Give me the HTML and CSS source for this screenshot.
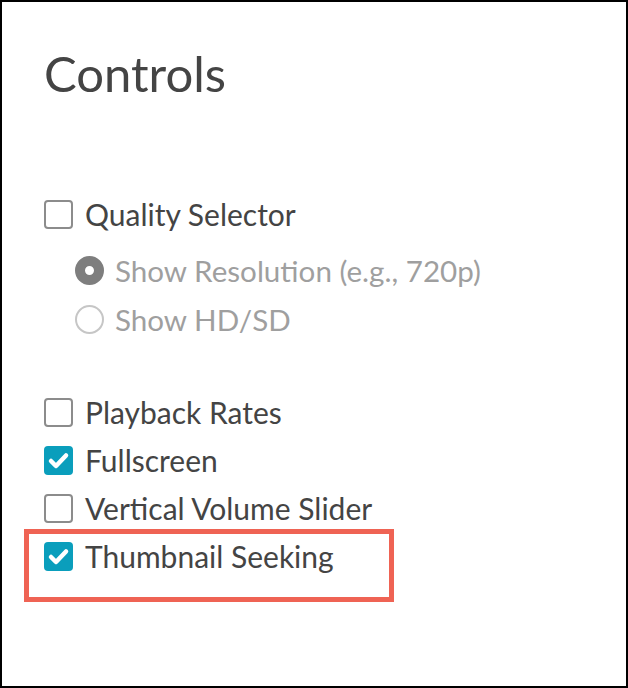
FILE: index.html
```html
<!DOCTYPE html>
<html>
<head>
<meta charset="utf-8">
<link rel="stylesheet" href="styles.css">
</head>
<body>
<div class="panel">
  <h1 class="title">Controls</h1>
  <div class="row row-first">
    <span class="box"></span><span class="label">Quality Selector</span>
  </div>
  <div class="sub">
    <div class="row row-radio">
      <span class="radio radio-on"></span><span class="label label-dim">Show Resolution (e.g., 720p)</span>
    </div>
    <div class="row row-radio">
      <span class="radio"></span><span class="label label-dim">Show HD/SD</span>
    </div>
  </div>
  <div class="group">
    <div class="row">
      <span class="box"></span><span class="label">Playback Rates</span>
    </div>
    <div class="row">
      <span class="box box-on"><svg viewBox="0 0 29 29" width="29" height="29"><path d="M7 15 L12 20 L22 9.5" fill="none" stroke="#fff" stroke-width="4.5" stroke-linecap="round" stroke-linejoin="round"/></svg></span><span class="label">Fullscreen</span>
    </div>
    <div class="row">
      <span class="box"></span><span class="label">Vertical Volume Slider</span>
    </div>
    <div class="highlight">
      <div class="row row-hl">
        <span class="box box-on"><svg viewBox="0 0 29 29" width="29" height="29"><path d="M7 15 L12 20 L22 9.5" fill="none" stroke="#fff" stroke-width="4.5" stroke-linecap="round" stroke-linejoin="round"/></svg></span><span class="label">Thumbnail Seeking</span>
      </div>
    </div>
  </div>
</div>
</body>
</html>
```
FILE: styles.css
```css
html, body {
  margin: 0;
  padding: 0;
  background: #fff;
}
.panel {
  box-sizing: border-box;
  width: 628px;
  height: 688px;
  border: 2px solid #000;
  padding: 42px 0 0 42px;
  font-family: Lato, "Open Sans", sans-serif;
  color: #444;
}
.title {
  margin: 0;
  font-size: 49px;
  font-weight: 400;
  line-height: 58px;
  color: #444;
}
.row {
  display: flex;
  align-items: center;
  height: 48px;
  font-size: 30px;
  line-height: 48px;
}
.row-first {
  margin-top: 88px;
}
.sub {
  margin-top: 8px;
  padding-left: 31px;
}
.row-radio {
  height: 49px;
  font-size: 29.6px;
}
.group {
  margin-top: 44px;
}
.box {
  box-sizing: border-box;
  width: 29px;
  height: 29px;
  border: 2px solid #8c8c8c;
  border-radius: 4px;
  flex: none;
  margin-right: 12px;
  display: flex;
}
.box-on {
  border: none;
  background: #0a9ebc;
}
.radio {
  box-sizing: border-box;
  width: 29px;
  height: 29px;
  border: 2px solid #c6c6c6;
  border-radius: 50%;
  flex: none;
  margin-right: 11px;
}
.radio-on {
  border: 10px solid #7e7e7e;
  background: #fff;
}
.label {
  white-space: nowrap;
}
.label-dim {
  color: #9f9f9f;
}
.highlight {
  box-sizing: border-box;
  width: 370px;
  margin: -3px 0 0 -20px;
  border: 5px solid #ef6354;
  padding: 0 0 19px 15px;
}
.row-hl {
  height: 44px;
}
```
